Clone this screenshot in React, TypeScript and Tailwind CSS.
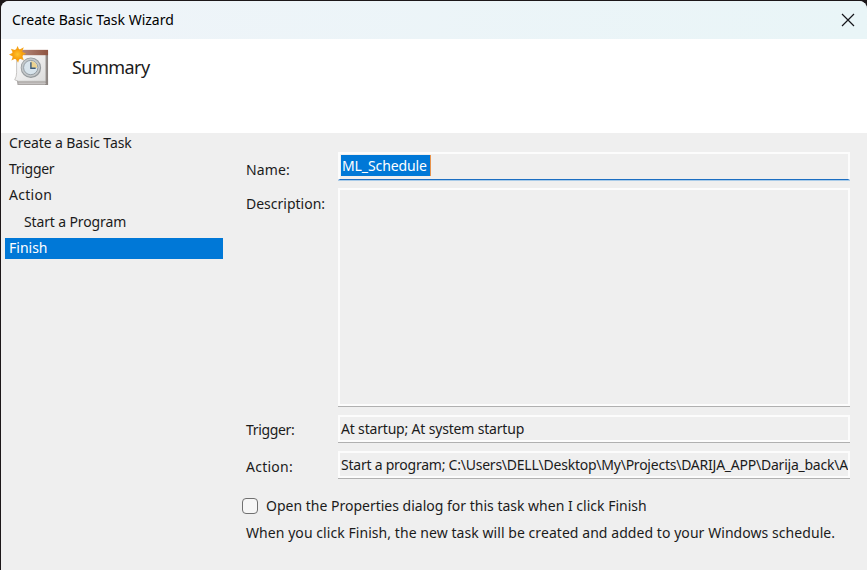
import type { ReactNode } from "react";

function TaskIcon() {
  return (
    <svg width="40" height="42" viewBox="0 0 42 44" className="block">
      <defs>
        <linearGradient id="paper" x1="0" y1="0" x2="1" y2="1">
          <stop offset="0" stopColor="#ffffff" />
          <stop offset="1" stopColor="#dcdcdc" />
        </linearGradient>
        <linearGradient id="binding" x1="0" y1="0" x2="1" y2="0">
          <stop offset="0" stopColor="#b98f80" />
          <stop offset="1" stopColor="#8f5442" />
        </linearGradient>
        <radialGradient id="sun">
          <stop offset="0" stopColor="#ffc52e" />
          <stop offset="1" stopColor="#f79a08" />
        </radialGradient>
      </defs>
      <path d="M8 35 H41 V41 H9 Z" fill="#aaa6a4" />
      <path d="M38 5 H41 V41 H38 Z" fill="#8c8582" />
      <path d="M8 5 H38.5 V37 H10 L6 35.5 Q8 32 8 28 Z" fill="url(#paper)" stroke="#b8b5b3" strokeWidth="0.8" />
      <path d="M10 39 H39" stroke="#e0dedd" strokeWidth="0.8" />
      <rect x="9" y="4" width="32" height="5.6" fill="url(#binding)" />
      <circle cx="23" cy="22.8" r="10.7" fill="#94999c" />
      <circle cx="22.8" cy="22.6" r="9.7" fill="#c3c7c9" />
      <circle cx="22.8" cy="22.6" r="7.5" fill="#d8e4ec" stroke="#8c969d" strokeWidth="0.9" />
      <path d="M23 22.5 V15.6 A7 7 0 0 1 29.6 23 Z" fill="#ecd391" />
      <path d="M23 17 V23.3 H28" fill="none" stroke="#3d5a76" strokeWidth="1.5" />
      <path
        d="M9 0 L10.8 4 L15.5 1.2 L13.8 6 L18 8.2 L13.8 10 L15.5 15 L11 13 L9.5 17.5 L7 13 L2.5 15.3 L4 11 L0 8.8 L4 7 L2 2.8 L7 4.5 Z"
        fill="#f5a31a"
      />
      <circle cx="9" cy="8.7" r="5.6" fill="url(#sun)" />
    </svg>
  );
}

function Field({ children, className = "h-[28px]", active = false }: { children?: ReactNode; className?: string; active?: boolean }) {
  return (
    <div className={`w-[512px] border-b ${active ? "border-[#a9cbe8]" : "border-[#b0b0b0]"} ${className}`}>
      <div
        className={`h-full overflow-hidden border-2 border-[#fcfcfc] px-px ${active ? "border-b-[1px] border-b-[#1b6ec2]" : ""}`}
      >
        {children}
      </div>
    </div>
  );
}

function Step({ children, className = "" }: { children: ReactNode; className?: string }) {
  return <li className={`mb-[5px] h-[21px] pl-1 leading-[20px] ${className}`}>{children}</li>;
}

export default function App() {
  return (
    <div className="h-[570px] w-[867px] overflow-hidden bg-[#1c1719] pl-px pt-px font-['Noto_Sans','Open_Sans',sans-serif] text-[14px] text-[#1b1b1b]">
      <div className="h-full overflow-hidden rounded-t-[8px] bg-[#efefef]">
        <header className="flex h-[38px] items-center justify-between bg-linear-to-r from-[#eff4f9] to-[#e9f5f7] pl-[11px] pr-[12px] text-black">
          <h1 className="whitespace-nowrap pb-[2px]">Create Basic Task Wizard</h1>
          <svg width="14" height="14" viewBox="0 0 14 14" className="block">
            <path d="M1 1 L13 13 M13 1 L1 13" stroke="#15151a" strokeWidth="1.2" fill="none" />
          </svg>
        </header>
        <section className="flex h-[94px] bg-white pl-[8px] pt-[7px]">
          <TaskIcon />
          <h2 className="ml-[23px] mt-[6px] text-[18px] leading-[30px] tracking-[-0.55px]">Summary</h2>
        </section>
        <main className="flex whitespace-nowrap">
          <ul className="w-[222px] pl-1">
            <Step className="tracking-[-0.1px]">Create a Basic Task</Step>
            <Step className="tracking-[-0.3px]">Trigger</Step>
            <Step className="tracking-[0.3px]">Action</Step>
            <Step className="pl-[19px] pt-px tracking-[-0.13px]">Start a Program</Step>
            <Step className="mt-[6px] bg-[#0078d7] text-white">Finish</Step>
          </ul>
          <div className="flex flex-col pl-[19px] pt-[19px]">
            <div className="flex h-[36px]">
              <div className="w-[96px] pl-1 pt-[8px] leading-[20px] tracking-[0.15px]">Name:</div>
              <Field active className="h-[29px]">
                <div className="mt-px h-[21px] w-[90px] border-r border-[#e8924a] bg-[#0078d7] pl-px leading-[21px] tracking-[-0.1px] text-white">ML_Schedule</div>
              </Field>
            </div>
            <div className="flex h-[227px]">
              <div className="w-[96px] pl-1 pt-[6px] leading-[20px]">Description:</div>
              <Field className="h-[219px]" />
            </div>
            <div className="flex h-[36px]">
              <div className="w-[96px] pl-1 pt-[5px] leading-[20px] tracking-[-0.35px]">Trigger:</div>
              <Field><div className="leading-[24px] tracking-[-0.18px]">At startup; At system startup</div></Field>
            </div>
            <div className="flex h-[44px]">
              <div className="w-[96px] pl-1 pt-[6px] leading-[20px] tracking-[0.25px]">Action:</div>
              <Field><div className="leading-[24px] tracking-[-0.235px]">Start a program; C:\Users\DELL\Desktop\My\Projects\DARIJA_APP\Darija_back\A</div></Field>
            </div>
            <label className="flex h-[26px] items-start">
              <span className="mt-[3px] size-[16px] rounded-[4px] border border-[#707070] bg-[#f6f6f6]" />
              <span className="ml-[8px] leading-[22px]">Open the Properties dialog for this task when I click Finish</span>
            </label>
            <p className="pl-1 pt-px leading-[22px] tracking-[0.06px]">When you click Finish, the new task will be created and added to your Windows schedule.</p>
          </div>
        </main>
      </div>
    </div>
  );
}
